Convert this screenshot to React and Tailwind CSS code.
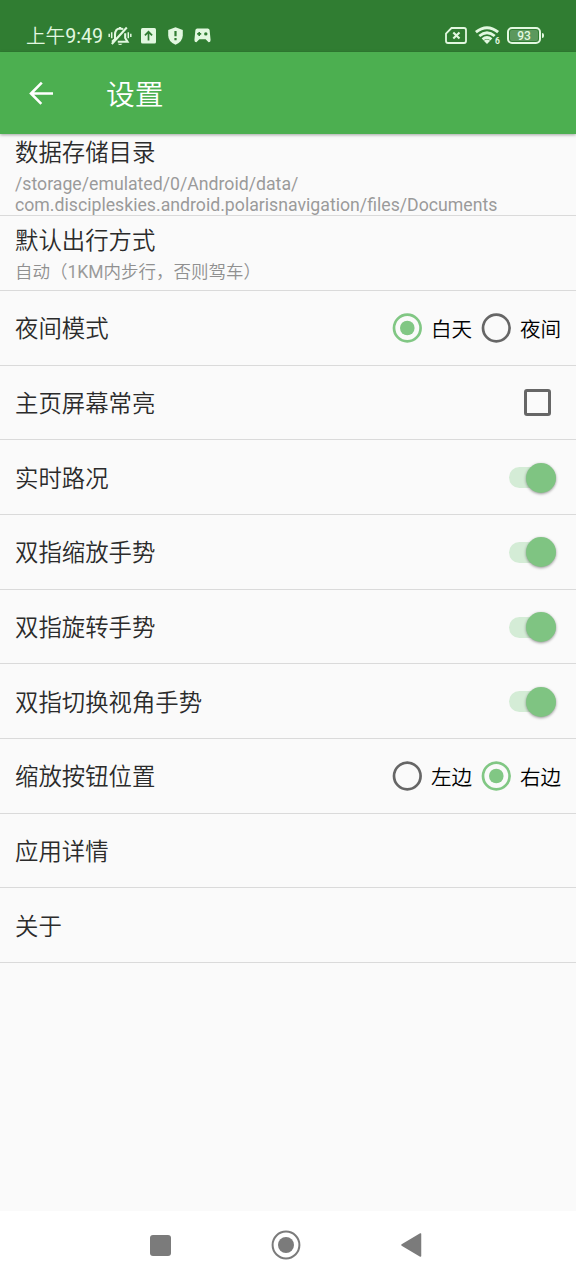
import React from "react";

const Line = ({ children, className = "" }) => (
  <div className={`flex h-[74.67px] items-center justify-between border-b border-[#dadada] pl-[15px] ${className}`}>
    {children}
  </div>
);

const Label = ({ children }) => (
  <span className="block pt-[3px] text-[23.4px] font-[350] leading-[28px] text-[#2b2b2b]">{children}</span>
);

const Radio = ({ on, text }) => (
  <div className="flex items-center">
    <svg width="30" height="30" viewBox="0 0 30 30" className="shrink-0">
      <circle cx="15.3" cy="15" r="13.3" fill="none" stroke={on ? "#81c784" : "#666666"} strokeWidth="2.7" />
      {on && <circle cx="15.3" cy="15" r="7.3" fill="#81c784" />}
    </svg>
    <span className="ml-[9px] w-[41px] whitespace-nowrap pt-[3px] text-[20.6px] font-[350] leading-6 text-black">{text}</span>
  </div>
);

const RadioRow = ({ label, options, selected }) => (
  <Line className="pr-[15px]">
    <Label>{label}</Label>
    <div className="flex gap-[9px] pt-px">
      {options.map((o) => (
        <Radio key={o} text={o} on={o === selected} />
      ))}
    </div>
  </Line>
);

const SwitchRow = ({ label }) => (
  <Line className="pr-5">
    <Label>{label}</Label>
    <div className="mt-px flex h-[21px] w-[47px] items-center justify-end rounded-full bg-[#d4ecd6]">
      <div className="size-[30px] shrink-0 rounded-full bg-[#7fc482] shadow-[0_1px_3px_rgba(0,0,0,0.4)]" />
    </div>
  </Line>
);

const StatusBar = () => (
  <div className="flex h-[52px] items-center bg-[#307d32] pl-[26px] pr-8 pt-[19px] text-[#e2f8e0]">
    <span className="w-[82px] whitespace-nowrap pt-[2px] text-[19.6px] font-[350] leading-6">
      上午<span className="font-normal">9:49</span>
    </span>
    <svg width="24" height="20" viewBox="0 0 24 20" fill="none" stroke="currentColor" strokeWidth="2.1">
      <path d="M7 13.5V8.5Q7.3 2.7 12 2.5Q14 2.5 15 3.5M17.2 7.2V12L19.5 15.7H9.8M4 15.7L7 13M3.8 18L18.8 1.5M12 3V1" />
      <path d="M9.8 17.8h4.7q-2.4 2.5-4.7 0z" fill="currentColor" stroke="none" />
      <path d="M3.7 6.3v6M1.2 7.7v3.4M20.3 6.3v6M22.8 7.7v3.4" strokeWidth="1.5" />
    </svg>
    <svg className="ml-[9px]" width="15" height="16" viewBox="0 0 15 16">
      <rect width="15" height="15.5" rx="1.5" fill="currentColor" />
      <path d="M7.5 12.5V4M3.9 7.4L7.5 3.8l3.6 3.6" fill="none" stroke="#307d32" strokeWidth="1.7" />
    </svg>
    <svg className="ml-3" width="15" height="18" viewBox="0 0 15 18">
      <path d="M7.5 .3L14.8 3V8.5Q14.6 14.8 7.5 17.7Q.4 14.8 .2 8.5V3Z" fill="currentColor" />
      <path d="M7.5 4v5.3M7.5 11v2.2" stroke="#307d32" strokeWidth="2.2" />
    </svg>
    <svg className="ml-[11px]" width="17" height="15" viewBox="0 0 17 15">
      <path d="M3.2 .5H13.8Q15.3.5 15.6 2L16.6 12Q16.6 14.4 14.6 14.3L11.6 11.3H5.4L2.4 14.3Q.4 14.4.4 12L1.4 2Q1.7.5 3.2.5Z" fill="currentColor" />
      <path d="M3.2 5.9h4M5.2 3.9v4" stroke="#307d32" strokeWidth="1.6" />
      <circle cx="11.8" cy="5.9" r="1.7" fill="#307d32" />
    </svg>
    <svg className="ml-auto" width="22" height="17" viewBox="0 0 22 17" fill="none" stroke="currentColor">
      <path d="M6.5 1H19Q21 1 21 3V14Q21 16 19 16H3Q1 16 1 14V6.5Z" strokeWidth="1.8" />
      <path d="M8.3 5.4l6.2 6.2M14.5 5.4l-6.2 6.2" strokeWidth="2.1" />
    </svg>
    <div className="relative ml-2 h-[19px] w-[25px]">
      <svg width="25" height="19" viewBox="0 0 25 19" fill="none" stroke="currentColor" strokeWidth="2.9">
        <path d="M.9 6.2Q12 -2.9 23.1 6.2M4.3 10Q12 3.5 19.7 10M7.6 13.4Q12 9.7 16.4 13.4" />
        <path d="M8.8 14.7Q12 12.3 15.2 14.7L12 18Z" fill="currentColor" stroke="none" />
      </svg>
      <span className="absolute right-0 top-[11px] text-[8.5px] font-bold leading-[9px]">6</span>
    </div>
    <div className="ml-[7px] flex items-center">
      <div className="flex h-[17px] w-[34px] items-center justify-center rounded-[5px] border-2 border-[#e2f8e0] p-[1px]">
        <div className="flex h-full w-full items-center justify-center rounded-[2px] bg-[#5c985d] text-[12px] font-medium leading-3">93</div>
      </div>
      <div className="ml-[1px] h-[5px] w-[2px] rounded-r bg-[#e2f8e0]" />
    </div>
  </div>
);

export default function App() {
  return (
    <div className="flex h-[1280px] w-[576px] flex-col overflow-hidden bg-[#fafafa] font-['Roboto','Noto_Sans_CJK_SC',sans-serif]">
      <StatusBar />
      <header className="z-10 flex h-[82px] shrink-0 items-center bg-[#4caf50] pl-[29px] text-white shadow-[0_1px_3px_rgba(0,0,0,0.35)]">
        <svg width="24" height="24" viewBox="0 0 24 24" fill="none" stroke="currentColor" strokeWidth="2.6">
          <path d="M24 12.5H2.2M12.8 1.7L2 12.5l10.3 10.3" />
        </svg>
        <h1 className="ml-[53px] pt-[4px] text-[28.8px] font-[350] leading-9">设置</h1>
      </header>
      <main className="flex-1">
        <div className="h-[82.4px] border-b border-[#dadada] pl-[15px] pt-[2px]">
          <div className="h-[38px]"><Label>数据存储目录</Label></div>
          <p className="text-[17.7px] leading-[21px] text-[#9a9a9a]">
            /storage/emulated/0/Android/data/<br />com.discipleskies.android.polarisnavigation/files/Documents
          </p>
        </div>
        <div className="h-[74.67px] border-b border-[#dadada] pl-[15px] pt-2">
          <div className="h-[37px]"><Label>默认出行方式</Label></div>
          <p className="text-[17.5px] font-[350] leading-[22px] text-[#909090]">
            自动（<span className="font-normal text-[#9a9a9a]">1KM</span>内步行，否则驾车）
          </p>
        </div>
        <RadioRow label="夜间模式" options={["白天", "夜间"]} selected="白天" />
        <Line className="pr-[25px]">
          <Label>主页屏幕常亮</Label>
          <div className="size-[27px] rounded-[3px] border-[3px] border-[#666666]" />
        </Line>
        <SwitchRow label="实时路况" />
        <SwitchRow label="双指缩放手势" />
        <SwitchRow label="双指旋转手势" />
        <SwitchRow label="双指切换视角手势" />
        <RadioRow label="缩放按钮位置" options={["左边", "右边"]} selected="右边" />
        <Line><Label>应用详情</Label></Line>
        <Line><Label>关于</Label></Line>
      </main>
      <nav className="flex h-[69px] shrink-0 items-center bg-white pl-[149.5px] text-[#7b7b7b]">
        <div className="mb-px size-[21px] rounded-[3px] bg-[#7b7b7b]" />
        <svg className="mb-px ml-[100.5px]" width="30" height="30" viewBox="0 0 30 30">
          <circle cx="15" cy="15" r="13.4" fill="none" stroke="currentColor" strokeWidth="2" />
          <circle cx="15" cy="15" r="8" fill="currentColor" />
        </svg>
        <svg className="mb-px ml-[99px]" width="22" height="26" viewBox="0 0 22 26">
          <path d="M20.5 2V24L2 13Z" fill="currentColor" stroke="currentColor" strokeWidth="1.5" strokeLinejoin="round" />
        </svg>
      </nav>
    </div>
  );
}
